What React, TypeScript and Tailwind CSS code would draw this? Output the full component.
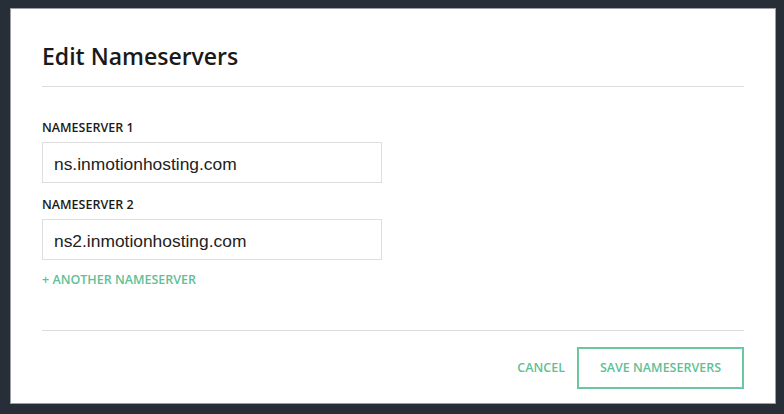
import React, { useState } from 'react';

const FONT = { fontFamily: '"Open Sans", "Noto Sans", sans-serif' };

export default function App() {
  const [servers, setServers] = useState(['ns.inmotionhosting.com', 'ns2.inmotionhosting.com']);

  const updateServer = (i: number, value: string) => {
    setServers(prev => prev.map((s, idx) => (idx === i ? value : s)));
  };

  return (
    <div className="w-[784px] h-[414px] bg-[#272e37] pt-[8px] pl-[10px] pr-[8px] pb-[10px]">
      <div
        className="w-[766px] h-[396px] bg-white border border-[#9aa0a6] px-[31px] flex flex-col"
        style={FONT}
      >
        <div className="pt-[32px] pb-[15px] border-b border-[#dcdcdc]">
          <h2 className="font-['Open_Sans',sans-serif] text-[23px] leading-[30px] font-semibold text-[#1a1a1a]">
            Edit Nameservers
          </h2>
        </div>

        <div className="pt-[33px] flex flex-col">
          {servers.map((s, i) => (
            <div key={i} className={i > 0 ? 'mt-[14px]' : ''}>
              <label className="block font-['Open_Sans',sans-serif] text-[12.5px] leading-[16px] font-semibold text-[#1a1a1a] mb-[6px]">
                NAMESERVER {i + 1}
              </label>
              <input
                type="text"
                value={s}
                onChange={e => updateServer(i, e.target.value)}
                className="w-[340px] h-[41px] px-[11px] pt-[3px] border border-[#dedede] font-['Liberation_Sans',Arial,sans-serif] text-[17.4px] text-[#222] focus:outline-none"
              />
            </div>
          ))}
          <button
            type="button"
            onClick={() => setServers(prev => [...prev, ''])}
            className="self-start mt-[12px] font-['Open_Sans',sans-serif] text-[12.5px] leading-[16px] font-semibold text-[#5fbf96]"
          >
            + ANOTHER NAMESERVER
          </button>
        </div>

        <div className="mt-[42px] border-t border-[#dcdcdc] pt-[16px] flex justify-end items-center gap-[12px]">
          <button
            type="button"
            className="font-['Open_Sans',sans-serif] text-[12.5px] font-semibold text-[#5fbf96]"
          >
            CANCEL
          </button>
          <button
            type="button"
            className="w-[167px] h-[42px] border-2 border-[#6cc6a2] font-['Open_Sans',sans-serif] text-[12.5px] font-semibold text-[#5fbf96]"
          >
            SAVE NAMESERVERS
          </button>
        </div>
      </div>
    </div>
  );
}
